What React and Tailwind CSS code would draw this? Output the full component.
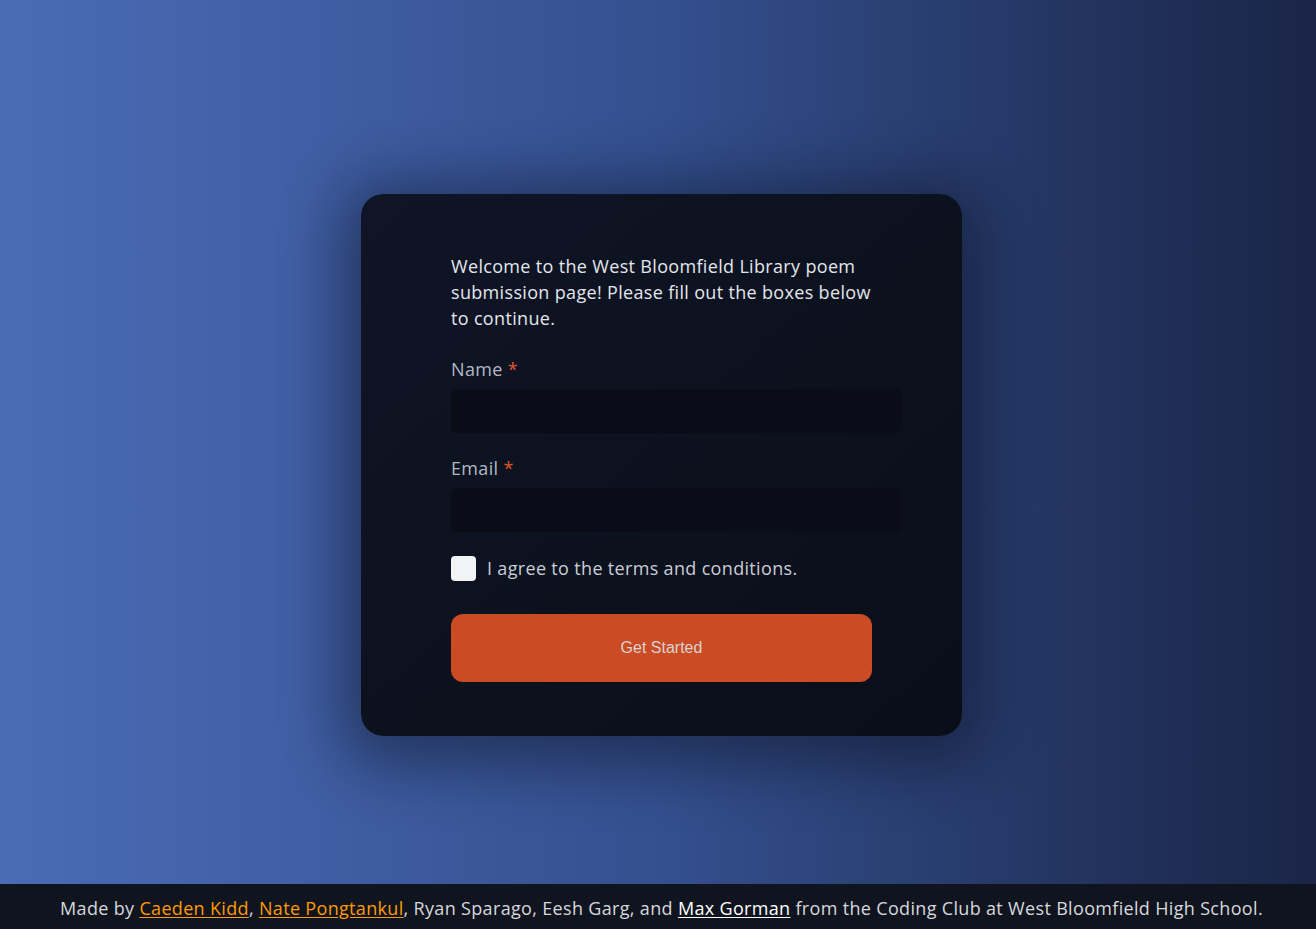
export default function App() {
  return (
    <div
      className="relative min-h-screen w-full bg-gradient-to-r from-[#4a6bb6] via-[#34508f] to-[#1a2547] flex items-center justify-center tracking-[0.33px]"
      style={{ fontFamily: "'Open Sans', 'Noto Sans', sans-serif" }}
    >
      <div className="ml-[7px] mt-[1px] w-[601px] rounded-[22px] bg-gradient-to-br from-[#0f1526] to-[#0a0e18] shadow-[0_10px_60px_20px_rgba(8,12,25,0.45)] pl-[90px] pr-[62px] pt-[59px] pb-[54px]">
        <p className="text-[18px] leading-[26px] text-[#e3e6ec] w-[425px]">
          Welcome to the West Bloomfield Library poem submission page! Please fill out the boxes below to continue.
        </p>

        <label className="block mt-[25px] text-[18px] leading-[26px] text-[#b3b8c3]">
          Name <span className="text-[#e0562b]">*</span>
        </label>
        <input
          type="text"
          className="block mt-[7px] h-[44px] w-[450px] rounded-[6px] bg-[#0a0d17] outline-none border-0"
        />

        <label className="block mt-[22px] text-[18px] leading-[26px] text-[#b3b8c3]">
          Email <span className="text-[#e0562b]">*</span>
        </label>
        <input
          type="email"
          className="block mt-[7px] h-[44px] w-[450px] rounded-[6px] bg-[#0a0d17] outline-none border-0"
        />

        <div className="flex items-center mt-[23px] gap-[11px]">
          <span className="block w-[25px] h-[25px] rounded-[4px] bg-[#f1f3f4]"></span>
          <span className="text-[18px] leading-[26px] text-[#c9cdd6]">I agree to the terms and conditions.</span>
        </div>

        <button
          className="mt-[33px] w-[421px] h-[68px] rounded-[12px] bg-[#cb4b25] text-[16px] text-[#d8d4d0] tracking-normal"
          style={{ fontFamily: "'Liberation Sans', Arial, sans-serif" }}
        >
          Get Started
        </button>
      </div>

      <footer className="fixed bottom-0 left-0 right-0 h-[45px] pt-[3px] bg-[#10141f] flex items-center justify-center text-[18px] text-[#d6d8dd]">
        <span className="ml-[7px]">
          Made by <a className="text-[#ff9a00] font-medium underline underline-offset-2">Caeden Kidd</a>,{" "}
          <a className="text-[#ff9a00] font-medium underline underline-offset-2">Nate Pongtankul</a>, Ryan Sparago, Eesh Garg, and{" "}
          <a className="text-white underline underline-offset-2">Max Gorman</a> from the Coding Club at West Bloomfield High School.
        </span>
      </footer>
    </div>
  );
}
